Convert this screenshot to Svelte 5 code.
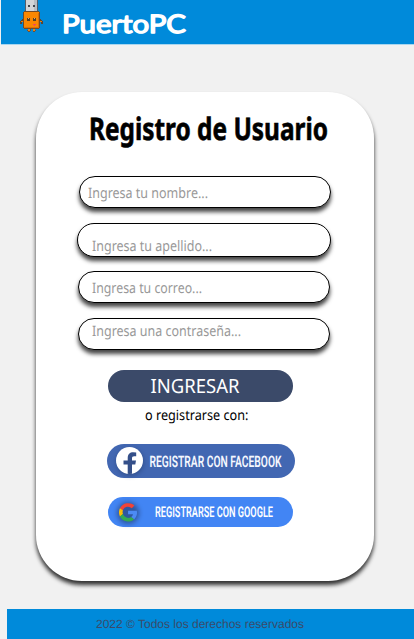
<script>
  const fields = [
    { text: 'Ingresa tu nombre...', x: 8, y: 21, length: 120, left: 43, width: 252, height: 32, top: 17 },
    { text: 'Ingresa tu apellido...', x: 14, y: 27, length: 120, left: 41, width: 254, height: 34, top: 15 },
    { text: 'Ingresa tu correo...', x: 13, y: 21, length: 110, left: 42, width: 252, height: 32, top: 14 },
    { text: 'Ingresa una contraseña...', x: 13, y: 17, length: 149, left: 42, width: 252, height: 32, top: 15 }
  ];
</script>

<div class="page">
  <header>
    <svg class="mascot" width="24" height="34" viewBox="0 0 24 34" shape-rendering="crispEdges">
      <path d="M5 0h13v12H5z" fill="#555e69" />
      <path d="M6 0h11v11H6z" fill="#d3d5d7" />
      <path d="M14 0h3v11h-3z" fill="#b9bec3" />
      <path d="M8 5h2v2H8zM13 5h2v2h-2z" fill="#41474d" />
      <path d="M2 19h2v3H2v2H0v-3h1v-1h1zM19 19h2v1h1v1h1v3h-2v-2h-2z" fill="#5c4430" />
      <path d="M1 21h2v1H1zM20 21h2v1h-2z" fill="#e58416" />
      <path d="M3 12h1v-1h15v1h1v16h-1v1H4v-1H3z" fill="#704a28" />
      <path d="M4 12h15v16H4z" fill="#fa8700" />
      <path d="M18 13h1v15h-1zM4 27h15v1H4z" fill="#d86f08" />
      <path d="M7 18h3v3H7zM13 18h3v3h-3z" fill="#594025" />
      <path d="M8 18h1v1H8zM14 18h1v1h-1z" fill="#d7aa71" />
      <path d="M13 24h3v1h-1v1h-1v-1h-1z" fill="#f0475c" />
      <path d="M8 29h3v2h-1v1H8v-1H7v-1h1zM13 29h2v1h1v1h-1v1h-2z" fill="#705033" />
      <path d="M8 29h2v2H8zM13 29h2v2h-2z" fill="#e58218" />
    </svg>
    <svg class="brand" width="140" height="44"><text x="0" y="33" textLength="124" lengthAdjust="spacingAndGlyphs">PuertoPC</text></svg>
  </header>

  <main>
    <svg class="title" width="338" height="67"><text x="53" y="48" textLength="239" lengthAdjust="spacingAndGlyphs">Registro de Usuario</text></svg>
    {#each fields as field}
      <div class="field" style="width:{field.width}px;height:{field.height}px;margin:{field.top}px 0 0 {field.left}px">
        <svg width="240" height="30"><text x={field.x} y={field.y} textLength={field.length} lengthAdjust="spacingAndGlyphs">{field.text}</text></svg>
      </div>
    {/each}
    <div class="submit">
      <svg width="185" height="32"><text x="42.5" y="23" textLength="89" lengthAdjust="spacingAndGlyphs">INGRESAR</text></svg>
    </div>
    <svg class="alternate" width="338" height="42"><text x="109" y="18" textLength="103.5" lengthAdjust="spacingAndGlyphs">o registrarse con:</text></svg>
    <div class="social facebook">
      <svg width="188" height="34">
        <defs>
          <clipPath id="disc"><circle cx="22.5" cy="16.5" r="13.5" /></clipPath>
        </defs>
        <circle class="glow" cx="23" cy="18" r="13.5" />
        <circle cx="22.5" cy="16.5" r="13.5" fill="#fff" />
        <path clip-path="url(#disc)" d="M20.7 31V20.5h-4.2v-4h4.2v-2.3c0-4.1 2.2-6 5.6-6l2.9.3v3.7h-2c-1.7 0-2.2.8-2.2 2.2v2.1h4l-.7 4H25V31z" fill="#344f89" />
        <text x="42.5" y="23" textLength="132" lengthAdjust="spacingAndGlyphs">REGISTRAR CON FACEBOOK</text>
      </svg>
    </div>
    <div class="social google">
      <svg width="185" height="30">
        <circle class="glow" cx="20" cy="16" r="11" />
        <g transform="translate(10.7 6) scale(.39)">
          <path fill="#f44336" d="M3.1 13.4A24 24 0 0 1 40.4 6.6l-6.8 6.7a14.2 14.2 0 0 0-22.9 5.2z" />
          <path fill="#fbbc05" d="M3.1 13.4a24 24 0 0 0 0 21.2l7.8-6.1a14 14 0 0 1-.2-10z" />
          <path fill="#34a853" d="M3.1 34.6A24 24 0 0 0 40 41.8l-7.7-6a14.2 14.2 0 0 1-21.4-7.3z" />
          <path fill="#4c8bf5" d="M24 20h22.5A24 24 0 0 1 40 41.8l-7.7-6c2.4-1.6 3.9-3.8 4.4-6.8H24z" />
        </g>
        <text x="47" y="20" textLength="118" lengthAdjust="spacingAndGlyphs">REGISTRARSE CON GOOGLE</text>
      </svg>
    </div>
  </main>

  <footer>
    <svg width="340" height="30"><text x="89" y="19" textLength="208" lengthAdjust="spacingAndGlyphs">2022 © Todos los derechos reservados</text></svg>
  </footer>
</div>

<style>
  :global(body) { margin: 0; background: #f1f1f1; }
  .page { width: 414px; height: 639px; overflow: hidden; background: #f1f1f1; display: flex; flex-direction: column; }
  svg { display: block; flex: none; overflow: visible; }
  text { text-rendering: geometricPrecision; }
  header { flex: none; height: 44px; margin-left: 1px; background: #008ada; border-bottom: 1px solid #a9d6ef; display: flex; align-items: flex-start; }
  .mascot { margin-left: 19px; }
  .brand { margin-left: 18px; }
  .brand text { font: 400 25.5px Lato, sans-serif; fill: #fff; stroke: #fff; stroke-width: 1.4px; stroke-linejoin: round; stroke-linecap: round; }
  main { box-sizing: border-box; width: 338px; height: 489px; margin: 47px 0 0 36px; border-radius: 46px; background: #fff; box-shadow: 0 4px 4px #000c; display: flex; flex-direction: column; flex: none; }
  .title text { font: 700 31px "Noto Sans", sans-serif; fill: #000; stroke: #000; stroke-width: .6px; }
  .field { box-sizing: border-box; flex: none; border: 1px solid #000; border-radius: 17px; background: #fff; box-shadow: 0 4px 4px #000b; }
  .field text { font: 400 14.5px "Noto Sans", sans-serif; fill: #999; }
  .submit { flex: none; width: 185px; height: 32px; margin: 20px 0 0 72px; border-radius: 16px; background: #3b4a69; }
  .submit text { font: 400 19.5px "Noto Sans", sans-serif; fill: #fff; }
  .alternate text { font: 400 14px "Noto Sans", sans-serif; fill: #000; }
  .social { flex: none; border-radius: 17px; }
  .facebook { width: 188px; height: 34px; margin-left: 71px; background: #4267b2; }
  .google { width: 185px; height: 30px; margin: 19px 0 0 72px; background: #4285f4; }
  .social text { font: 600 15.8px Roboto, sans-serif; fill: #f5f8ff; }
  .google text { font-size: 14.8px; fill: #fff; }
  .glow { fill: #263f72; opacity: .65; filter: blur(2.5px); }
  footer { flex: none; height: 30px; margin: 28px 0 0 7px; background: #008ada; }
  footer text { font: 400 12px "Liberation Sans", Arial, sans-serif; fill: #3b4a69; }
</style>
